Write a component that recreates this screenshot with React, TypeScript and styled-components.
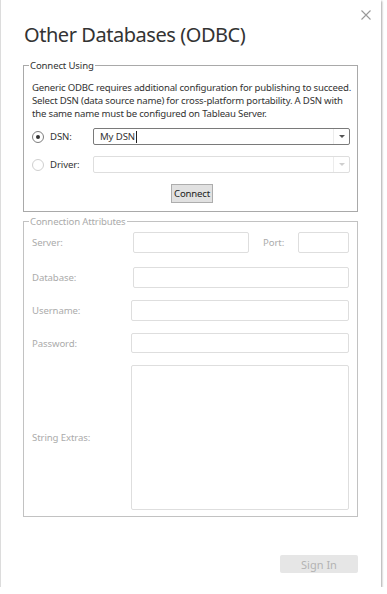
import { createGlobalStyle, styled } from 'styled-components';

const GlobalStyle = createGlobalStyle`
  html, body {
    margin: 0;
    padding: 0;
    background: #ffffff;
  }

  body {
    font-family: 'Noto Sans', 'Open Sans', 'Liberation Sans', sans-serif;
    color: #333333;
  }
`;

const Dialog = styled.div`
  position: relative;
  box-sizing: border-box;
  width: 381px;
  height: 587px;
  padding: 21px 0 0 22px;
  background: #ffffff;
  border-left: 1px solid #dcdcdc;
  box-shadow: 1px 1px 2px rgba(0, 0, 0, 0.35);
  display: flex;
  flex-direction: column;
`;

const CloseButton = styled.button`
  position: absolute;
  top: 9px;
  right: 9px;
  width: 12px;
  height: 12px;
  padding: 0;
  border: none;
  background: none;
  cursor: pointer;
  display: flex;
`;

const Title = styled.h1`
  margin: 0;
  padding-left: 1px;
  font-size: 20px;
  line-height: 28px;
  letter-spacing: -0.45px;
  font-weight: 400;
  color: #333333;
`;

const Group = styled.fieldset<{ $disabled?: boolean; $gapTop: number }>`
  box-sizing: border-box;
  width: 335px;
  margin: ${({ $gapTop }) => $gapTop}px 0 0 0;
  padding: 0 4px 0 8px;
  border: 1px solid ${({ $disabled }) => ($disabled ? '#c2c2c2' : '#a9a9a9')};
  min-inline-size: auto;
`;

const Legend = styled.legend<{ $disabled?: boolean }>`
  margin-left: -3px;
  padding: 0 1px;
  font-size: 9.6px;
  line-height: 13px;
  letter-spacing: -0.15px;
  color: ${({ $disabled }) => ($disabled ? '#ababab' : '#333333')};
`;

const Description = styled.p`
  margin: 9px 0 0 0;
  font-size: 9.6px;
  line-height: 13px;
  letter-spacing: -0.2px;
  white-space: nowrap;
  color: #333333;
`;

const ChoiceList = styled.div`
  display: flex;
  flex-direction: column;
  gap: 11px;
  margin-top: 8px;
`;

const ChoiceRow = styled.label`
  display: flex;
  align-items: center;
  height: 17px;
`;

const Radio = styled.span<{ $checked?: boolean }>`
  box-sizing: border-box;
  width: 12px;
  height: 12px;
  border-radius: 50%;
  border: 1px solid ${({ $checked }) => ($checked ? '#7d7d7d' : '#cfcfcf')};
  display: flex;
  align-items: center;
  justify-content: center;

  &::after {
    content: '';
    width: 4px;
    height: 4px;
    border-radius: 50%;
    background: #333333;
    display: ${({ $checked }) => ($checked ? 'block' : 'none')};
  }
`;

const ChoiceLabel = styled.span`
  width: 43px;
  margin-left: 6px;
  font-size: 9.6px;
  letter-spacing: -0.1px;
  color: #333333;
`;

const Select = styled.div<{ $disabled?: boolean }>`
  box-sizing: border-box;
  width: 257px;
  height: 17px;
  display: flex;
  align-items: stretch;
  border: 1px solid ${({ $disabled }) => ($disabled ? '#dedede' : '#7a7a7a')};
  border-radius: 2px;
  background: #ffffff;
`;

const SelectValue = styled.span`
  flex: 1;
  display: flex;
  align-items: center;
  padding-left: 6px;
  font-size: 9.6px;
  letter-spacing: -0.1px;
  color: #333333;
`;

const Caret = styled.span`
  display: inline-block;
  width: 1px;
  height: 12px;
  margin-left: 1px;
  background: #222222;
`;

const SelectArrow = styled.span<{ $disabled?: boolean }>`
  width: 15px;
  border-left: 1px solid #ececec;
  display: flex;
  align-items: center;
  justify-content: center;

  &::after {
    content: '';
    border-left: 3px solid transparent;
    border-right: 3px solid transparent;
    border-top: 3px solid ${({ $disabled }) => ($disabled ? '#cfcfcf' : '#555555')};
  }
`;

const ConnectRow = styled.div`
  display: flex;
  justify-content: center;
  margin: 11px 0 8px 0;
  padding-right: 1px;
`;

const Button = styled.button`
  box-sizing: border-box;
  height: 19px;
  padding: 0 2px;
  font-family: inherit;
  font-size: 9.6px;
  letter-spacing: -0.2px;
  color: #222222;
  background: #e1e1e1;
  border: 1px solid #adadad;
  border-radius: 0;
`;

const AttrList = styled.div`
  display: flex;
  flex-direction: column;
  gap: 12px;
  padding: 4px 0 6px 0;
`;

const AttrRow = styled.div<{ $height: number; $extraGap?: number }>`
  display: flex;
  align-items: center;
  height: ${({ $height }) => $height}px;
  margin-bottom: ${({ $extraGap }) => $extraGap ?? 0}px;
`;

const AttrLabel = styled.span<{ $width: number }>`
  width: ${({ $width }) => $width}px;
  flex-shrink: 0;
  font-size: 9.6px;
  letter-spacing: -0.1px;
  color: #ababab;
`;

const Field = styled.div<{ $width: number }>`
  box-sizing: border-box;
  width: ${({ $width }) => $width}px;
  height: 100%;
  border: 1px solid #dedede;
  border-radius: 2px;
  background: #ffffff;
`;

const PortLabel = styled.span`
  width: 35px;
  margin-left: 14px;
  font-size: 9.6px;
  letter-spacing: -0.1px;
  color: #ababab;
`;

const Footer = styled.div`
  display: flex;
  justify-content: flex-end;
  margin-top: 38px;
  padding-right: 23px;
`;

const SignInButton = styled.button`
  box-sizing: border-box;
  width: 78px;
  height: 18px;
  padding: 0;
  font-family: inherit;
  font-size: 11px;
  color: #b3b3b3;
  background: #e6e6e6;
  border: none;
  border-radius: 2px;
`;

export default function App() {
  return (
    <>
      <GlobalStyle />
      <Dialog>
        <CloseButton aria-label="Close">
          <svg width="12" height="12" viewBox="0 0 12 12">
            <path d="M1.5 1.5 L10.5 10.5 M10.5 1.5 L1.5 10.5" stroke="#9a9a9a" strokeWidth="1.1" fill="none" />
          </svg>
        </CloseButton>
        <Title>Other Databases (ODBC)</Title>

        <Group $gapTop={10}>
          <Legend>Connect Using</Legend>
          <Description>
            Generic ODBC requires additional configuration for publishing to succeed.
            <br />
            Select DSN (data source name) for cross-platform portability. A DSN with
            <br />
            the same name must be configured on Tableau Server.
          </Description>
          <ChoiceList>
            <ChoiceRow>
              <Radio $checked />
              <ChoiceLabel>DSN:</ChoiceLabel>
              <Select>
                <SelectValue>
                  My DSN
                  <Caret />
                </SelectValue>
                <SelectArrow />
              </Select>
            </ChoiceRow>
            <ChoiceRow>
              <Radio />
              <ChoiceLabel>Driver:</ChoiceLabel>
              <Select $disabled>
                <SelectValue />
                <SelectArrow $disabled />
              </Select>
            </ChoiceRow>
          </ChoiceList>
          <ConnectRow>
            <Button>Connect</Button>
          </ConnectRow>
        </Group>

        <Group $disabled $gapTop={3}>
          <Legend $disabled>Connection Attributes</Legend>
          <AttrList>
            <AttrRow $height={21} $extraGap={2}>
              <AttrLabel $width={101}>Server:</AttrLabel>
              <Field $width={116} />
              <PortLabel>Port:</PortLabel>
              <Field $width={51} />
            </AttrRow>
            <AttrRow $height={21}>
              <AttrLabel $width={101}>Database:</AttrLabel>
              <Field $width={216} />
            </AttrRow>
            <AttrRow $height={21}>
              <AttrLabel $width={99}>Username:</AttrLabel>
              <Field $width={218} />
            </AttrRow>
            <AttrRow $height={20}>
              <AttrLabel $width={99}>Password:</AttrLabel>
              <Field $width={218} />
            </AttrRow>
            <AttrRow $height={145}>
              <AttrLabel $width={99}>String Extras:</AttrLabel>
              <Field $width={218} />
            </AttrRow>
          </AttrList>
        </Group>

        <Footer>
          <SignInButton disabled>Sign In</SignInButton>
        </Footer>
      </Dialog>
    </>
  );
}
